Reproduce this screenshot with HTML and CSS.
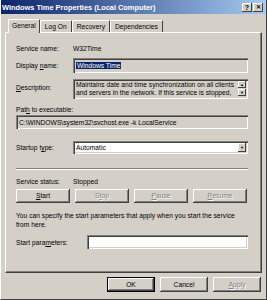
FILE: index.html
```html
<!DOCTYPE html>
<html lang="en">
<head>
    <meta charset="UTF-8">
    <title>Windows Time Properties (Local Computer)</title>
    <link rel="stylesheet" href="styles.css">
</head>
<body>
    <div class="window">
        <div class="titlebar">
            <span class="title">Windows Time Properties (Local Computer)</span>
            <span class="tbtn">?</span>
            <span class="tbtn close">&#x2715;</span>
        </div>

        <div class="tabs">
            <div class="tab active">General</div>
            <div class="tab">Log On</div>
            <div class="tab">Recovery</div>
            <div class="tab">Dependencies</div>
        </div>

        <div class="panel">
            <div class="row row-name">
                <span class="label">Service name:</span>
                <span>W32Time</span>
            </div>
            <div class="row row-display">
                <span class="label">Display <u>n</u>ame:</span>
                <div class="field readonly"><span class="selected">Windows Time</span></div>
            </div>
            <div class="row row-desc">
                <span class="label"><u>D</u>escription:</span>
                <div class="field readonly desc">
                    <div class="desc-text">Maintains date and time synchronization on all clients and servers in the network. If this service is stopped,</div>
                    <div class="scroll">
                        <span class="sbtn">&#9650;</span>
                        <span class="sbtn">&#9660;</span>
                    </div>
                </div>
            </div>
            <div class="path-label">Pat<u>h</u> to executable:</div>
            <div class="field readonly path">C:\WINDOWS\system32\svchost.exe -k LocalService</div>
            <div class="row row-startup">
                <span class="label">Startup t<u>y</u>pe:</span>
                <div class="field combo">
                    <span class="combo-text">Automatic</span>
                    <span class="sbtn drop">&#9660;</span>
                </div>
            </div>
            <div class="separator"></div>
            <div class="row row-status">
                <span class="label">Service status:</span>
                <span>Stopped</span>
            </div>
            <div class="actions">
                <span class="btn"><u>S</u>tart</span>
                <span class="btn disabled">S<u>t</u>op</span>
                <span class="btn disabled"><u>P</u>ause</span>
                <span class="btn disabled"><u>R</u>esume</span>
            </div>
            <p class="hint">You can specify the start parameters that apply when you start the service from here.</p>
            <div class="row row-params">
                <span class="label">Start para<u>m</u>eters:</span>
                <div class="field"></div>
            </div>
        </div>

        <div class="dialog-buttons">
            <span class="btn default">OK</span>
            <span class="btn">Cancel</span>
            <span class="btn disabled"><u>A</u>pply</span>
        </div>
    </div>
</body>
</html>
```

FILE: styles.css
```css
body {
    margin: 0;
    background-color: #d4d0c8;
    font-family: "Liberation Sans", Arial, sans-serif;
    font-size: 6.7px;
    color: #000;
}

u {
    text-decoration-thickness: 1px;
    text-underline-offset: 1px;
}

.window {
    width: 267px;
    height: 300px;
    box-sizing: border-box;
    border-left: 1px solid #fff;
    border-right: 1px solid #404040;
    border-bottom: 1px solid #404040;
    display: flex;
    flex-direction: column;
}

.titlebar {
    height: 14px;
    flex-shrink: 0;
    background: linear-gradient(to right, #0a246a, #a6caf0);
    display: flex;
    align-items: center;
    gap: 1px;
    padding: 0 3px 0 1px;
}

.title {
    flex: 1;
    color: #fff;
    font-weight: bold;
    font-size: 7.4px;
}

.tbtn {
    width: 10px;
    height: 9px;
    background-color: #d4d0c8;
    box-shadow: inset -1px -1px #404040, inset 1px 1px #fff;
    font-weight: bold;
    font-size: 7px;
    line-height: 9px;
    text-align: center;
}

.tbtn.close {
    font-size: 6px;
}

.tabs {
    display: flex;
    align-items: flex-end;
    height: 14px;
    margin: 4px 0 0 7px;
    position: relative;
    z-index: 1;
}

.tab {
    height: 11px;
    padding: 0 4px;
    border: 1px solid;
    border-color: #fff #404040 transparent #fff;
    border-bottom: none;
    border-radius: 1px 1px 0 0;
    line-height: 11px;
}

.tab.active {
    height: 13px;
    padding: 0 3px;
    line-height: 12px;
    margin-bottom: -1px;
    background-color: #d4d0c8;
}

.panel {
    height: 241px;
    margin: 0 4px;
    box-sizing: border-box;
    border: 1px solid;
    border-color: #fff #404040 #404040 #fff;
    box-shadow: inset -1px -1px #808080;
    padding: 0 13px 0 10px;
}

.row {
    display: flex;
    align-items: center;
}

.label {
    width: 57px;
    flex-shrink: 0;
}

.field {
    flex: 1;
    height: 14px;
    box-sizing: border-box;
    background-color: #fff;
    box-shadow: inset 1px 1px #808080, inset 2px 2px #404040, inset -1px -1px #fff, inset -2px -2px #d4d0c8;
    padding: 0 3px;
    display: flex;
    align-items: center;
}

.field.readonly {
    background-color: #d4d0c8;
}

.row-name {
    margin-top: 11px;
    height: 9px;
}

.row-display {
    margin-top: 5px;
}

.row-display .field {
    height: 15px;
}

.selected {
    background-color: #0a246a;
    color: #fff;
    padding: 0 1px;
}

.row-desc {
    margin-top: 6px;
    align-items: flex-start;
}

.row-desc .label {
    margin-top: 5px;
}

.field.desc {
    height: 20px;
    padding: 2px 2px 2px 3px;
    align-items: flex-start;
    gap: 2px;
}

.desc-text {
    flex: 1;
    line-height: 8px;
}

.scroll {
    display: flex;
    flex-direction: column;
    gap: 1px;
}

.sbtn {
    width: 8px;
    height: 7px;
    background-color: #d4d0c8;
    box-shadow: inset -1px -1px #404040, inset 1px 1px #fff;
    font-size: 4px;
    line-height: 7px;
    text-align: center;
}

.path-label {
    margin-top: 6px;
    height: 9px;
    line-height: 9px;
}

.field.path {
    margin-top: 1px;
}

.row-startup {
    margin-top: 12px;
}

.field.combo {
    height: 13px;
    padding: 2px 2px 2px 3px;
}

.combo-text {
    flex: 1;
}

.sbtn.drop {
    height: 9px;
    line-height: 9px;
}

.separator {
    margin-top: 14px;
    height: 0;
    border-top: 1px solid #808080;
    border-bottom: 1px solid #fff;
}

.row-status {
    margin-top: 7px;
    height: 9px;
}

.actions {
    display: flex;
    gap: 5px;
    margin-top: 3px;
}

.btn {
    width: 54px;
    height: 14px;
    box-sizing: border-box;
    background-color: #d4d0c8;
    box-shadow: inset -1px -1px #404040, inset 1px 1px #fff, inset -2px -2px #808080;
    text-align: center;
    line-height: 14px;
}

.btn.disabled {
    color: #808080;
    text-shadow: 1px 1px #fff;
}

.hint {
    margin: 8px 0 0;
    line-height: 9px;
}

.row-params {
    margin-top: 6px;
}

.row-params .label {
    width: 71px;
}

.dialog-buttons {
    display: flex;
    justify-content: flex-end;
    gap: 5px;
    margin: 4px 5px 0 0;
}

.dialog-buttons .btn {
    width: 48px;
    height: 15px;
    line-height: 15px;
}

.btn.default {
    box-shadow: inset 1px 1px #000, inset -1px -1px #000, inset -2px -2px #404040, inset 2px 2px #fff, inset -3px -3px #808080;
}
```
